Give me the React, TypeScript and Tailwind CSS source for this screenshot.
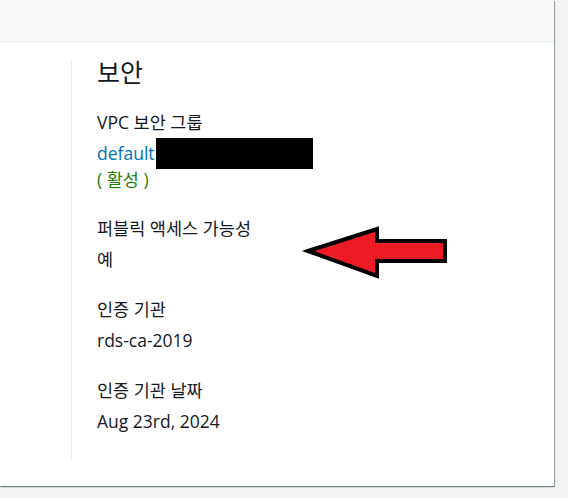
import React from "react";

function Field({
  label,
  children,
  mb = "mb-[23px]",
}: {
  label: string;
  children: React.ReactNode;
  mb?: string;
}) {
  return (
    <div className={mb}>
      <div className="text-[17.5px] leading-[27px] text-[#16191f]">{label}</div>
      <div className="mt-[4px] text-[17.5px] leading-[27px] text-[#16191f]">{children}</div>
    </div>
  );
}

export default function App() {
  return (
    <div
      className="relative w-[568px] h-[498px] bg-[#f2f3f3] overflow-hidden"
      style={{ fontFamily: '"Open Sans", "Noto Sans CJK KR", sans-serif' }}
    >
      <div className="w-[554px] h-[486px] bg-white shadow-[1px_1px_1px_0_rgba(0,28,36,0.35),0_1px_1px_0_rgba(0,28,36,0.3)] flex flex-col">
        <div className="h-[42px] bg-[#fafafa] border-b border-[#eaeded] shrink-0" />
        <div className="flex pt-[18px]">
          <div className="w-[71px] shrink-0" />
          <div className="border-l border-[#eaeded] h-[401px] pl-[25px]">
            <div className="text-[25px] leading-[32px] text-[#16191f] mt-[-4px] mb-[21px]">보안</div>
            <Field label="VPC 보안 그룹" mb="mb-[24px]">
              <div className="flex items-center h-[27px]">
                <span className="text-[#0073bb]">default</span>
                <span className="inline-block w-[157px] h-[31px] bg-black ml-[1px]" />
              </div>
              <div className="text-[#1d8102] leading-[24px]">( 활성 )</div>
            </Field>
            <Field label="퍼블릭 액세스 가능성">예</Field>
            <Field label="인증 기관">rds-ca-2019</Field>
            <Field label="인증 기관 날짜">Aug 23rd, 2024</Field>
          </div>
        </div>
      </div>
      <svg
        className="absolute left-[300px] top-[222px]"
        width="152"
        height="60"
        viewBox="0 0 152 60"
      >
        <polygon
          points="8,29 77,7 77,19 145,19 145,39 77,39 77,54"
          fill="#ed1c24"
          stroke="#000"
          strokeWidth="4"
          strokeLinejoin="miter"
          strokeMiterlimit="6"
        />
      </svg>
    </div>
  );
}
